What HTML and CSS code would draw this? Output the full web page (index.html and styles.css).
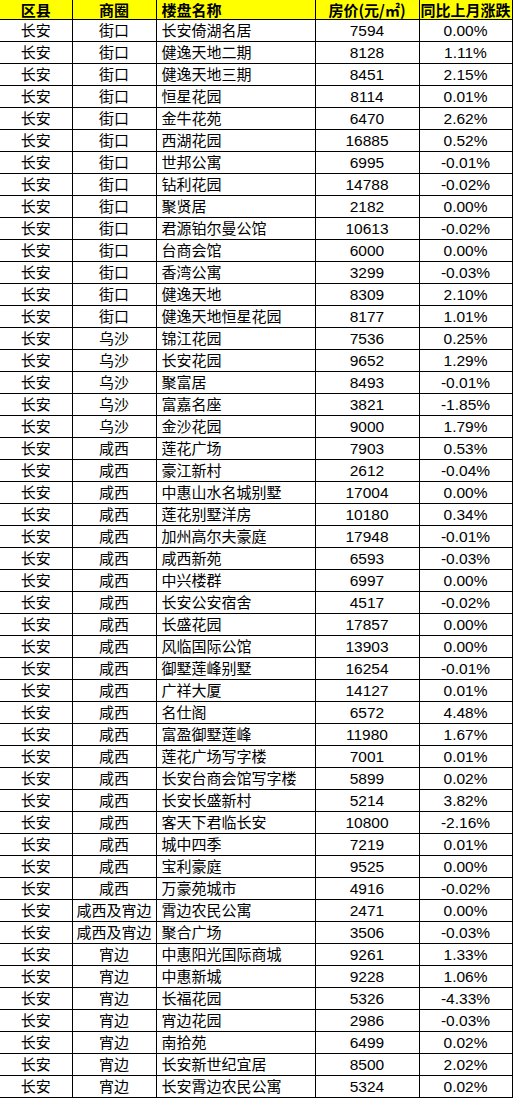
FILE: index.html
```html
<!DOCTYPE html>
<html lang="zh">
<head>
<meta charset="utf-8">
<title>房价表</title>
<link rel="stylesheet" href="styles.css">
</head>
<body>
<table class="sheet">
<colgroup>
<col class="c1"><col class="c2"><col class="c3"><col class="c4"><col class="c5">
</colgroup>
<thead>
<tr class="head"><th>区县</th><th>商圈</th><th class="name">楼盘名称</th><th>房价(元/㎡)</th><th>同比上月涨跌</th></tr>
</thead>
<tbody>
<tr><td>长安</td><td>街口</td><td class="name">长安倚湖名居</td><td class="num">7594</td><td class="num">0.00%</td></tr>
<tr><td>长安</td><td>街口</td><td class="name">健逸天地二期</td><td class="num">8128</td><td class="num">1.11%</td></tr>
<tr><td>长安</td><td>街口</td><td class="name">健逸天地三期</td><td class="num">8451</td><td class="num">2.15%</td></tr>
<tr><td>长安</td><td>街口</td><td class="name">恒星花园</td><td class="num">8114</td><td class="num">0.01%</td></tr>
<tr><td>长安</td><td>街口</td><td class="name">金牛花苑</td><td class="num">6470</td><td class="num">2.62%</td></tr>
<tr><td>长安</td><td>街口</td><td class="name">西湖花园</td><td class="num">16885</td><td class="num">0.52%</td></tr>
<tr><td>长安</td><td>街口</td><td class="name">世邦公寓</td><td class="num">6995</td><td class="num">-0.01%</td></tr>
<tr><td>长安</td><td>街口</td><td class="name">钻利花园</td><td class="num">14788</td><td class="num">-0.02%</td></tr>
<tr><td>长安</td><td>街口</td><td class="name">聚贤居</td><td class="num">2182</td><td class="num">0.00%</td></tr>
<tr><td>长安</td><td>街口</td><td class="name">君源铂尔曼公馆</td><td class="num">10613</td><td class="num">-0.02%</td></tr>
<tr><td>长安</td><td>街口</td><td class="name">台商会馆</td><td class="num">6000</td><td class="num">0.00%</td></tr>
<tr><td>长安</td><td>街口</td><td class="name">香湾公寓</td><td class="num">3299</td><td class="num">-0.03%</td></tr>
<tr><td>长安</td><td>街口</td><td class="name">健逸天地</td><td class="num">8309</td><td class="num">2.10%</td></tr>
<tr><td>长安</td><td>街口</td><td class="name">健逸天地恒星花园</td><td class="num">8177</td><td class="num">1.01%</td></tr>
<tr><td>长安</td><td>乌沙</td><td class="name">锦江花园</td><td class="num">7536</td><td class="num">0.25%</td></tr>
<tr><td>长安</td><td>乌沙</td><td class="name">长安花园</td><td class="num">9652</td><td class="num">1.29%</td></tr>
<tr><td>长安</td><td>乌沙</td><td class="name">聚富居</td><td class="num">8493</td><td class="num">-0.01%</td></tr>
<tr><td>长安</td><td>乌沙</td><td class="name">富嘉名座</td><td class="num">3821</td><td class="num">-1.85%</td></tr>
<tr><td>长安</td><td>乌沙</td><td class="name">金沙花园</td><td class="num">9000</td><td class="num">1.79%</td></tr>
<tr><td>长安</td><td>咸西</td><td class="name">莲花广场</td><td class="num">7903</td><td class="num">0.53%</td></tr>
<tr><td>长安</td><td>咸西</td><td class="name">豪江新村</td><td class="num">2612</td><td class="num">-0.04%</td></tr>
<tr><td>长安</td><td>咸西</td><td class="name">中惠山水名城别墅</td><td class="num">17004</td><td class="num">0.00%</td></tr>
<tr><td>长安</td><td>咸西</td><td class="name">莲花别墅洋房</td><td class="num">10180</td><td class="num">0.34%</td></tr>
<tr><td>长安</td><td>咸西</td><td class="name">加州高尔夫豪庭</td><td class="num">17948</td><td class="num">-0.01%</td></tr>
<tr><td>长安</td><td>咸西</td><td class="name">咸西新苑</td><td class="num">6593</td><td class="num">-0.03%</td></tr>
<tr><td>长安</td><td>咸西</td><td class="name">中兴楼群</td><td class="num">6997</td><td class="num">0.00%</td></tr>
<tr><td>长安</td><td>咸西</td><td class="name">长安公安宿舍</td><td class="num">4517</td><td class="num">-0.02%</td></tr>
<tr><td>长安</td><td>咸西</td><td class="name">长盛花园</td><td class="num">17857</td><td class="num">0.00%</td></tr>
<tr><td>长安</td><td>咸西</td><td class="name">风临国际公馆</td><td class="num">13903</td><td class="num">0.00%</td></tr>
<tr><td>长安</td><td>咸西</td><td class="name">御墅莲峰别墅</td><td class="num">16254</td><td class="num">-0.01%</td></tr>
<tr><td>长安</td><td>咸西</td><td class="name">广祥大厦</td><td class="num">14127</td><td class="num">0.01%</td></tr>
<tr><td>长安</td><td>咸西</td><td class="name">名仕阁</td><td class="num">6572</td><td class="num">4.48%</td></tr>
<tr><td>长安</td><td>咸西</td><td class="name">富盈御墅莲峰</td><td class="num">11980</td><td class="num">1.67%</td></tr>
<tr><td>长安</td><td>咸西</td><td class="name">莲花广场写字楼</td><td class="num">7001</td><td class="num">0.01%</td></tr>
<tr><td>长安</td><td>咸西</td><td class="name">长安台商会馆写字楼</td><td class="num">5899</td><td class="num">0.02%</td></tr>
<tr><td>长安</td><td>咸西</td><td class="name">长安长盛新村</td><td class="num">5214</td><td class="num">3.82%</td></tr>
<tr><td>长安</td><td>咸西</td><td class="name">客天下君临长安</td><td class="num">10800</td><td class="num">-2.16%</td></tr>
<tr><td>长安</td><td>咸西</td><td class="name">城中四季</td><td class="num">7219</td><td class="num">0.01%</td></tr>
<tr><td>长安</td><td>咸西</td><td class="name">宝利豪庭</td><td class="num">9525</td><td class="num">0.00%</td></tr>
<tr><td>长安</td><td>咸西</td><td class="name">万豪苑城市</td><td class="num">4916</td><td class="num">-0.02%</td></tr>
<tr><td>长安</td><td>咸西及宵边</td><td class="name">霄边农民公寓</td><td class="num">2471</td><td class="num">0.00%</td></tr>
<tr><td>长安</td><td>咸西及宵边</td><td class="name">聚合广场</td><td class="num">3506</td><td class="num">-0.03%</td></tr>
<tr><td>长安</td><td>宵边</td><td class="name">中惠阳光国际商城</td><td class="num">9261</td><td class="num">1.33%</td></tr>
<tr><td>长安</td><td>宵边</td><td class="name">中惠新城</td><td class="num">9228</td><td class="num">1.06%</td></tr>
<tr><td>长安</td><td>宵边</td><td class="name">长福花园</td><td class="num">5326</td><td class="num">-4.33%</td></tr>
<tr><td>长安</td><td>宵边</td><td class="name">宵边花园</td><td class="num">2986</td><td class="num">-0.03%</td></tr>
<tr><td>长安</td><td>宵边</td><td class="name">南拾苑</td><td class="num">6499</td><td class="num">0.02%</td></tr>
<tr><td>长安</td><td>宵边</td><td class="name">长安新世纪宜居</td><td class="num">8500</td><td class="num">2.02%</td></tr>
<tr><td>长安</td><td>宵边</td><td class="name">长安霄边农民公寓</td><td class="num">5324</td><td class="num">0.02%</td></tr>
</tbody>
</table>
</body>
</html>
```

FILE: styles.css
```css
html, body {
  margin: 0;
  padding: 0;
  background: #ffffff;
}

.sheet {
  border-collapse: collapse;
  table-layout: fixed;
  width: 512px;
  font-family: "Liberation Sans", "Noto Sans CJK SC", sans-serif;
  font-size: 15px;
  color: #000;
}

.c1 { width: 72px; }
.c2 { width: 84px; }
.c3 { width: 159px; }
.c4 { width: 104px; }
.c5 { width: 93px; }

.sheet th,
.sheet td {
  border: 1px solid #000;
  padding: 0;
  text-align: center;
  vertical-align: middle;
  line-height: 20px;
  white-space: nowrap;
  overflow: hidden;
}

.sheet tr:first-child th,
.sheet thead tr th { border-top: none; }

.sheet th:first-child,
.sheet td:first-child { border-left: none; }

.head th {
  background: #ffff00;
  font-weight: bold;
  height: 19px;
  line-height: 18px;
  font-family: "Noto Sans CJK SC", sans-serif;
}

.sheet td { height: 21px; }

.sheet .name {
  text-align: left;
  padding-left: 5px;
}

.sheet .num {
  font-size: 15.5px;
}
```
